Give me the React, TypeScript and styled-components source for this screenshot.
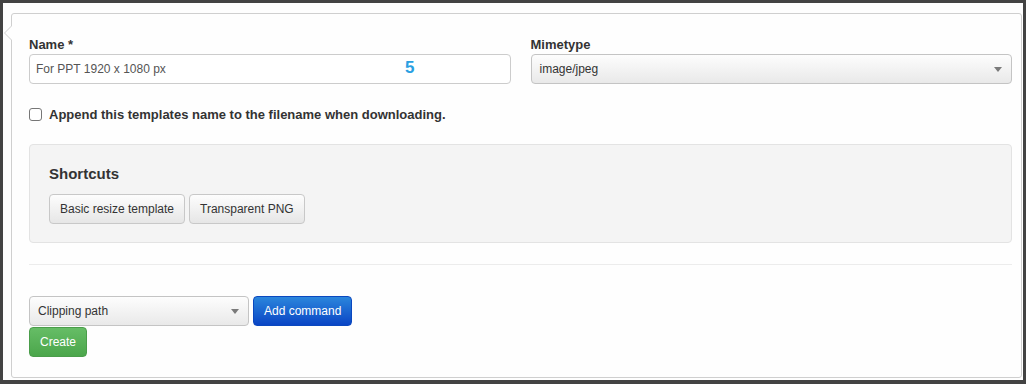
import styled, { createGlobalStyle } from "styled-components";

const GlobalStyle = createGlobalStyle`
  html, body {
    margin: 0;
    padding: 0;
    background: #434343;
  }
  body {
    font-family: "Liberation Sans", Arial, sans-serif;
    color: #333;
  }
`;

const Frame = styled.div`
  box-sizing: border-box;
  margin: 3px 3px 4px 3px;
  height: 377px;
  background: #fefefe;
  padding: 10px 1px 0 8px;
`;

const Popover = styled.div`
  position: relative;
  box-sizing: border-box;
  height: 365px;
  border: 1px solid #cfcfcf;
  border-radius: 3px;
  background: #fefefe;
  padding: 22px 9px 0 17px;

  &::before,
  &::after {
    content: "";
    position: absolute;
    width: 0;
    height: 0;
    border-style: solid;
  }
  &::before {
    left: -8px;
    top: 11px;
    border-width: 8px 8px 8px 0;
    border-color: transparent #cfcfcf transparent transparent;
  }
  &::after {
    left: -7px;
    top: 12px;
    border-width: 7px 7px 7px 0;
    border-color: transparent #fefefe transparent transparent;
  }
`;

const FieldRow = styled.div`
  display: grid;
  grid-template-columns: 1fr 1fr;
  column-gap: 20px;
`;

const Field = styled.div`
  display: flex;
  flex-direction: column;
`;

const Label = styled.label`
  display: block;
  font-size: 13px;
  font-weight: bold;
  line-height: 18px;
  color: #333;
`;

const InputWrap = styled.div`
  position: relative;
`;

const TextInput = styled.input`
  box-sizing: border-box;
  width: 100%;
  height: 30px;
  padding: 0 6px;
  border: 1px solid #ccc;
  border-radius: 4px;
  background: #fff;
  font-family: inherit;
  font-size: 12px;
  color: #555;
  outline: none;
`;

const CountBadge = styled.span`
  position: absolute;
  left: 376px;
  top: 4px;
  font-size: 17px;
  font-weight: bold;
  color: #2aa0e2;
  line-height: 20px;
`;

const SelectBox = styled.div<{ $width?: string }>`
  box-sizing: border-box;
  display: flex;
  align-items: center;
  justify-content: space-between;
  width: ${({ $width }) => $width || "100%"};
  height: 30px;
  padding: 0 9px 0 8px;
  border: 1px solid #c4c4c4;
  border-radius: 4px;
  background: linear-gradient(#fdfdfd, #e9e9e9);
  font-size: 12px;
  color: #333;
`;

const Caret = styled.span`
  width: 0;
  height: 0;
  border-left: 4px solid transparent;
  border-right: 4px solid transparent;
  border-top: 5px solid #7a7a7a;
`;

const CheckRow = styled.label`
  display: flex;
  align-items: center;
  gap: 7px;
  height: 20px;
  margin-top: 20px;
  font-size: 13px;
  font-weight: bold;
  color: #333;
`;

const CheckBox = styled.input`
  appearance: none;
  box-sizing: border-box;
  width: 13px;
  height: 13px;
  margin: 0;
  border: 1px solid #767676;
  border-radius: 3px;
  background: #fff;
`;

const Well = styled.div`
  box-sizing: border-box;
  margin-top: 20px;
  height: 99px;
  padding: 19px;
  background: #f4f4f4;
  border: 1px solid #e3e3e3;
  border-radius: 4px;
`;

const WellTitle = styled.div`
  font-size: 15px;
  font-weight: bold;
  line-height: 20px;
  color: #333;
`;

const ButtonRow = styled.div<{ $gap: number }>`
  display: flex;
  gap: ${({ $gap }) => $gap}px;
  align-items: center;
`;

const ShortcutRow = styled(ButtonRow)`
  margin-top: 10px;
`;

const Button = styled.button<{ $variant?: "default" | "primary" | "success" }>`
  box-sizing: border-box;
  height: 30px;
  padding: 0 10px;
  font-family: inherit;
  font-size: 12px;
  border-radius: 4px;
  cursor: pointer;
  ${({ $variant }) =>
    $variant === "primary"
      ? `
    color: #fff;
    border: 1px solid #0b48bf;
    background: linear-gradient(#2b86dc, #0a45c5);
  `
      : $variant === "success"
      ? `
    color: #fff;
    border: 1px solid #4a9d4a;
    background: linear-gradient(#66bd66, #4ba64b);
  `
      : `
    color: #333;
    border: 1px solid #c8c8c8;
    background: linear-gradient(#fdfdfd, #e6e6e6);
  `}
`;

const Divider = styled.hr`
  margin: 21px 0 0;
  border: 0;
  border-top: 1px solid #ececec;
`;

const CommandRow = styled(ButtonRow)`
  margin-top: 31px;
`;

const CreateRow = styled.div`
  margin-top: 1px;
`;

export default function App() {
  return (
    <>
      <GlobalStyle />
      <Frame>
        <Popover>
          <FieldRow>
            <Field>
              <Label>Name *</Label>
              <InputWrap>
                <TextInput defaultValue="For PPT 1920 x 1080 px" />
                <CountBadge>5</CountBadge>
              </InputWrap>
            </Field>
            <Field>
              <Label>Mimetype</Label>
              <SelectBox>
                <span>image/jpeg</span>
                <Caret />
              </SelectBox>
            </Field>
          </FieldRow>

          <CheckRow>
            <CheckBox type="checkbox" />
            Append this templates name to the filename when downloading.
          </CheckRow>

          <Well>
            <WellTitle>Shortcuts</WellTitle>
            <ShortcutRow $gap={4}>
              <Button>Basic resize template</Button>
              <Button>Transparent PNG</Button>
            </ShortcutRow>
          </Well>

          <Divider />

          <CommandRow $gap={4}>
            <SelectBox $width="220px">
              <span>Clipping path</span>
              <Caret />
            </SelectBox>
            <Button $variant="primary">Add command</Button>
          </CommandRow>
          <CreateRow>
            <Button $variant="success">Create</Button>
          </CreateRow>
        </Popover>
      </Frame>
    </>
  );
}
